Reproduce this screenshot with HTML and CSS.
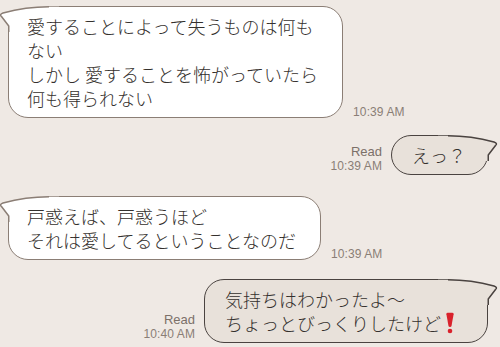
FILE: index.html
```html
<!DOCTYPE html>
<html lang="ja">
<head>
<meta charset="utf-8">
<link rel="stylesheet" href="styles.css">
</head>
<body>
<div class="chat">
  <div class="row in r1">
    <div class="bubble in-b">
      <svg class="tail" width="60" height="26" viewBox="0 0 60 26"><path class="c" d="M4,7 C15,4 30,0.75 50,0.75 L50,-1 L4,-1 Z"/><path class="f" d="M60,0.75 L50,0.75 C30,0.75 15,4 4,7 Q0,8.5 2.5,10.5 L9.75,20 L9.75,26 L60,26 Z"/><path class="s" d="M50,0.75 C30,0.75 15,4 4,7 Q0,8.5 2.5,10.5 L9.75,20 L9.75,26"/></svg>
      <p class="txt">愛することによって失うものは何も<br>ない<br>しかし 愛することを怖がっていたら<br>何も得られない</p>
    </div>
    <div class="meta"><span class="time">10:39 AM</span></div>
  </div>

  <div class="row out r2">
    <div class="meta"><span class="read">Read</span><span class="time">10:39 AM</span></div>
    <div class="bubble out-b">
      <svg class="tail" width="60" height="26" viewBox="0 0 60 26"><path class="c" d="M4,7 C15,4 30,0.75 50,0.75 L50,-1 L4,-1 Z"/><path class="f" d="M60,0.75 L50,0.75 C30,0.75 15,4 4,7 Q0,8.5 2.5,10.5 L9.75,20 L9.75,26 L60,26 Z"/><path class="s" d="M50,0.75 C30,0.75 15,4 4,7 Q0,8.5 2.5,10.5 L9.75,20 L9.75,26"/></svg>
      <p class="txt">えっ？</p>
    </div>
  </div>

  <div class="row in r3">
    <div class="bubble in-b">
      <svg class="tail" width="60" height="26" viewBox="0 0 60 26"><path class="c" d="M4,7 C15,4 30,0.75 50,0.75 L50,-1 L4,-1 Z"/><path class="f" d="M60,0.75 L50,0.75 C30,0.75 15,4 4,7 Q0,8.5 2.5,10.5 L9.75,20 L9.75,26 L60,26 Z"/><path class="s" d="M50,0.75 C30,0.75 15,4 4,7 Q0,8.5 2.5,10.5 L9.75,20 L9.75,26"/></svg>
      <p class="txt">戸惑えば、戸惑うほど<br>それは愛してるということなのだ</p>
    </div>
    <div class="meta"><span class="time">10:39 AM</span></div>
  </div>

  <div class="row out r4">
    <div class="meta"><span class="read">Read</span><span class="time">10:40 AM</span></div>
    <div class="bubble out-b wide">
      <svg class="tail" width="60" height="26" viewBox="0 0 60 26"><path class="c" d="M4,7 C15,4 30,0.75 50,0.75 L50,-1 L4,-1 Z"/><path class="f" d="M60,0.75 L50,0.75 C30,0.75 15,4 4,7 Q0,8.5 2.5,10.5 L9.75,20 L9.75,26 L60,26 Z"/><path class="s" d="M50,0.75 C30,0.75 15,4 4,7 Q0,8.5 2.5,10.5 L9.75,20 L9.75,26"/></svg>
      <p class="txt">気持ちはわかったよ〜<br>ちょっとびっくりしたけど<svg class="bang" width="18" height="22" viewBox="0 0 18 22"><path d="M5.4,2.2 Q5.2,0.8 6.8,0.8 L11.2,0.8 Q12.8,0.8 12.6,2.2 L10.5,14 Q10.3,15 9,15 Q7.7,15 7.5,14 Z"/><circle cx="9" cy="19" r="2.3"/></svg></p>
    </div>
  </div>
</div>
</body>
</html>
```
FILE: styles.css
```css
* { box-sizing: border-box; }
html, body { margin: 0; padding: 0; }
body {
  width: 500px;
  height: 347px;
  overflow: hidden;
  background: #efe9e4;
  font-family: "Noto Sans CJK JP", "Noto Sans", sans-serif;
  color: #34302d;
}
.chat {
  display: flex;
  flex-direction: column;
  padding: 6px 12px 0 8px;
}
.row {
  display: flex;
  align-items: flex-end;
}
.row.in { justify-content: flex-start; gap: 10px; }
.row.out { justify-content: flex-end; gap: 9px; }
.r2 { margin-top: 17px; }
.r3 { margin-top: 21px; }
.r4 { margin-top: 19px; }

.bubble {
  position: relative;
  border: 1.5px solid;
  border-radius: 20px;
  padding: 7px 24px 7px 18px;
}
.in-b {
  background: #ffffff;
  border-color: #8b7e75;
  border-top-left-radius: 0;
  --fill: #ffffff;
  --stroke: #8b7e75;
}
.out-b {
  background: #e8e1da;
  border-color: #4a4340;
  border-top-right-radius: 0;
  padding: 7px 21px 7px 20px;
  --fill: #e8e1da;
  --stroke: #4a4340;
}
.out-b.wide { padding-right: 28px; }
.tail {
  position: absolute;
  top: -1.5px;
  overflow: visible;
}
.in-b .tail { left: -10.5px; }
.out-b .tail { right: -10.5px; transform: scaleX(-1); }
.tail .c { fill: #efe9e4; }
.tail .f { fill: var(--fill); }
.tail .s { fill: none; stroke: var(--stroke); stroke-width: 1.5; stroke-linejoin: round; }

.txt {
  position: relative;
  margin: 0;
  font-size: 18px;
  font-weight: 300;
  line-height: 24px;
  white-space: nowrap;
}
.bang {
  vertical-align: -3px;
  fill: #d9222c;
}
.meta {
  display: flex;
  flex-direction: column;
  align-items: flex-end;
  font-family: "Liberation Sans", Arial, sans-serif;
  color: #8a7e76;
}
.row.in .meta { margin-bottom: -2px; }
.row.out .meta { margin-bottom: 1.5px; }
.read { font-size: 13px; line-height: 15px; color: #7c7069; }
.time { font-size: 12px; line-height: 15px; letter-spacing: 0.1px; }
```
